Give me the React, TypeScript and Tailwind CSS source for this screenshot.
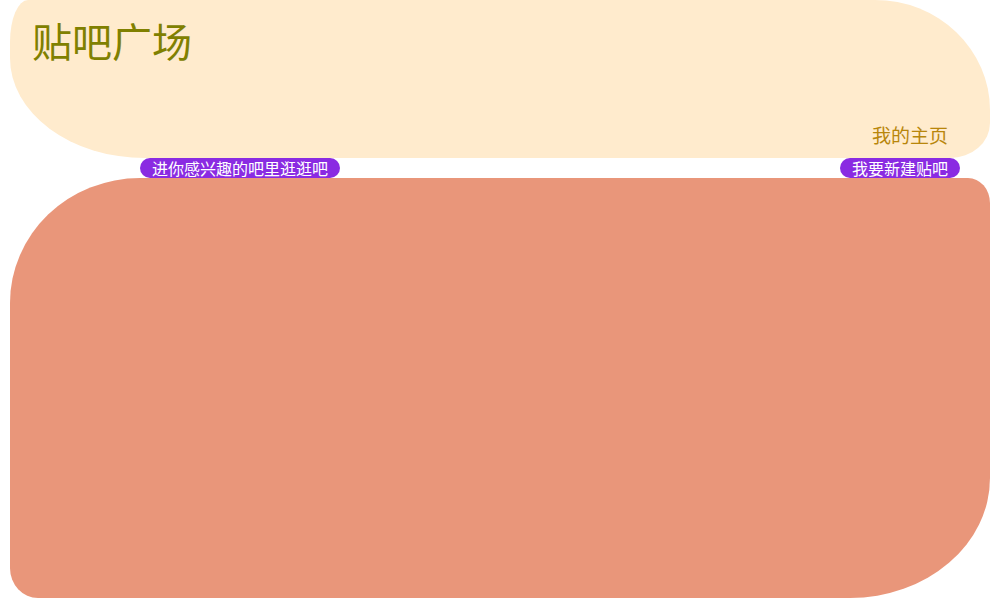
const font = "font-['Microsoft_YaHei','Noto_Sans_CJK_SC',sans-serif]";

export default function App() {
  return (
    <div className={`w-[995px] h-[598px] bg-white pl-[10px] pr-[5px] overflow-hidden ${font}`}>
      <header className="relative h-[158px] bg-[#ffebcd] rounded-[18px_115px_40px_135px/42px_110px_35px_100px] flex flex-col justify-between">
        <h1 className="pl-[22px] pt-[20px] text-[40px] leading-[40px] text-[#808000] font-normal">
          贴吧广场
        </h1>
        <div className="flex justify-end pr-[42px] pb-[14px]">
          <a href="#home" className="text-[19px] leading-[19px] text-[#b8860b]">
            我的主页
          </a>
        </div>
      </header>
      <nav className="flex justify-between h-[20px] pl-[130px] pr-[30px]">
        <button className="w-[200px] h-[20px] rounded-full bg-[#8a2be2] text-white text-[16px] leading-[20px]">
          进你感兴趣的吧里逛逛吧
        </button>
        <button className="w-[120px] h-[20px] rounded-full bg-[#8a2be2] text-white text-[16px] leading-[20px]">
          我要新建贴吧
        </button>
      </nav>
      <main className="h-[420px] bg-[#e9967a] rounded-[130px_22px_140px_28px/125px_25px_120px_30px]" />
    </div>
  );
}
